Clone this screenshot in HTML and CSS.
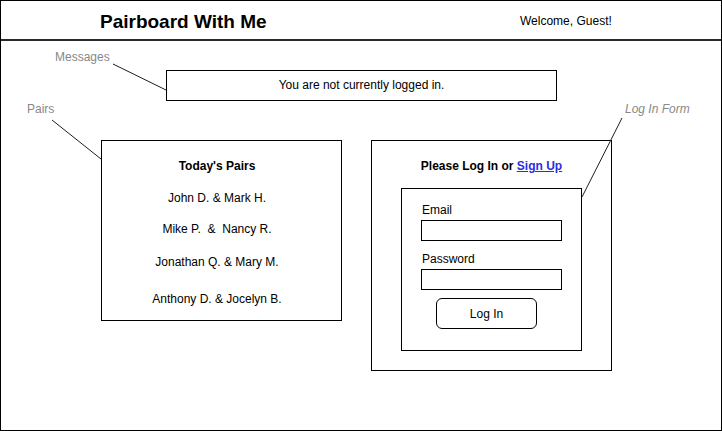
FILE: index.html
```html
<!DOCTYPE html>
<html lang="en">
<head>
<meta charset="utf-8">
<title>Pairboard With Me</title>
<link rel="stylesheet" href="styles.css">
</head>
<body>
<div class="frame">
  <header class="topbar">
    <h1 class="brand">Pairboard With Me</h1>
    <div class="welcome">Welcome, Guest!</div>
  </header>
  <main class="canvas">
    <div class="message">You are not currently logged in.</div>
    <div class="panels">
      <section class="panel pairs">
        <h2 class="panel-title">Today's Pairs</h2>
        <ul class="pair-list">
          <li>John D. &amp; Mark H.</li>
          <li>Mike P.&nbsp; &amp;&nbsp; Nancy R.</li>
          <li>Jonathan Q. &amp; Mary M.</li>
          <li>Anthony D. &amp; Jocelyn B.</li>
        </ul>
      </section>
      <section class="panel login">
        <h2 class="panel-title">Please Log In or <a class="link" href="#">Sign Up</a></h2>
        <form class="login-form">
          <label class="field-label" for="email">Email</label>
          <input id="email" class="field" type="email">
          <label class="field-label field-label-gap" for="password">Password</label>
          <input id="password" class="field" type="password">
          <button class="btn" type="button">Log In</button>
        </form>
      </section>
    </div>
  </main>
  <span class="note note-messages">Messages</span>
  <span class="note note-pairs">Pairs</span>
  <span class="note note-login">Log In Form</span>
  <svg class="leaders" width="722" height="431" viewBox="0 0 722 431" aria-hidden="true">
    <line x1="113" y1="64" x2="166" y2="90"/>
    <line x1="52" y1="120" x2="101" y2="159"/>
    <line x1="622" y1="118" x2="582" y2="197"/>
  </svg>
</div>
</body>
</html>
```
FILE: styles.css
```css
* { box-sizing: border-box; }

html, body {
  margin: 0;
  padding: 0;
  background: #fff;
}

body {
  font-family: "Liberation Sans", Arial, Helvetica, sans-serif;
  color: #000;
  font-size: 12px;
}

.frame {
  position: relative;
  width: 722px;
  height: 431px;
  border: 1px solid #000;
  overflow: hidden;
}

.topbar {
  display: grid;
  grid-template-columns: 419px auto;
  align-items: start;
  height: 40px;
  padding-left: 99px;
  border-bottom: 2px solid #2a2a2a;
}

.brand {
  margin: 11px 0 0;
  font-size: 19px;
  line-height: 20px;
  font-weight: bold;
}

.welcome {
  margin-top: 13px;
  margin-left: 1px;
  font-size: 12px;
  line-height: 14px;
}

.canvas {
  padding-top: 29px;
}

.message {
  margin-left: 165px;
  width: 391px;
  height: 31px;
  border: 1px solid #000;
  text-align: center;
  line-height: 29px;
}

.panels {
  display: flex;
  align-items: flex-start;
  gap: 29px;
  margin-top: 39px;
  padding-left: 100px;
}

.panel {
  width: 241px;
  border: 1px solid #000;
  padding-top: 18px;
}

.pairs {
  height: 181px;
  padding-right: 9px;
}

.login {
  height: 231px;
}

.panel-title {
  margin: 0;
  font-size: 12px;
  line-height: 14px;
  font-weight: bold;
  text-align: center;
}

.link {
  color: #2d2de2;
  text-decoration: underline;
}

.pair-list {
  list-style: none;
  margin: 0;
  padding: 0;
  text-align: center;
  line-height: 14px;
}

.pair-list li:nth-child(1) { margin-top: 18px; }
.pair-list li:nth-child(2) { margin-top: 17px; }
.pair-list li:nth-child(3) { margin-top: 19px; }
.pair-list li:nth-child(4) { margin-top: 23px; }

.login-form {
  display: flex;
  flex-direction: column;
  align-items: flex-start;
  margin: 15px 0 0 29px;
  width: 181px;
  height: 163px;
  border: 1px solid #000;
  padding: 14px 0 0 19px;
}

.field-label {
  padding-left: 1px;
  line-height: 14px;
  font-size: 12px;
}

.field-label-gap {
  margin-top: 11px;
}

.field {
  display: block;
  margin: 3px 0 0;
  width: 141px;
  height: 21px;
  padding: 0;
  border: 1px solid #000;
  border-radius: 0;
  background: #fff;
  font: inherit;
}

.btn {
  margin: 8px 0 0 15px;
  width: 101px;
  height: 31px;
  border: 1px solid #000;
  border-radius: 6px;
  background: #fff;
  color: #000;
  font-family: inherit;
  font-size: 12px;
  padding: 0;
}

.note {
  position: absolute;
  font-size: 12px;
  line-height: 14px;
  color: #888;
  white-space: nowrap;
}

.note-messages { left: 54px; top: 49px; }
.note-pairs { left: 26px; top: 101px; }
.note-login { left: 624px; top: 101px; font-style: italic; }

.leaders {
  position: absolute;
  left: -1px;
  top: -1px;
  pointer-events: none;
}

.leaders line {
  stroke: #1e1e1e;
  stroke-width: 1;
}
```
